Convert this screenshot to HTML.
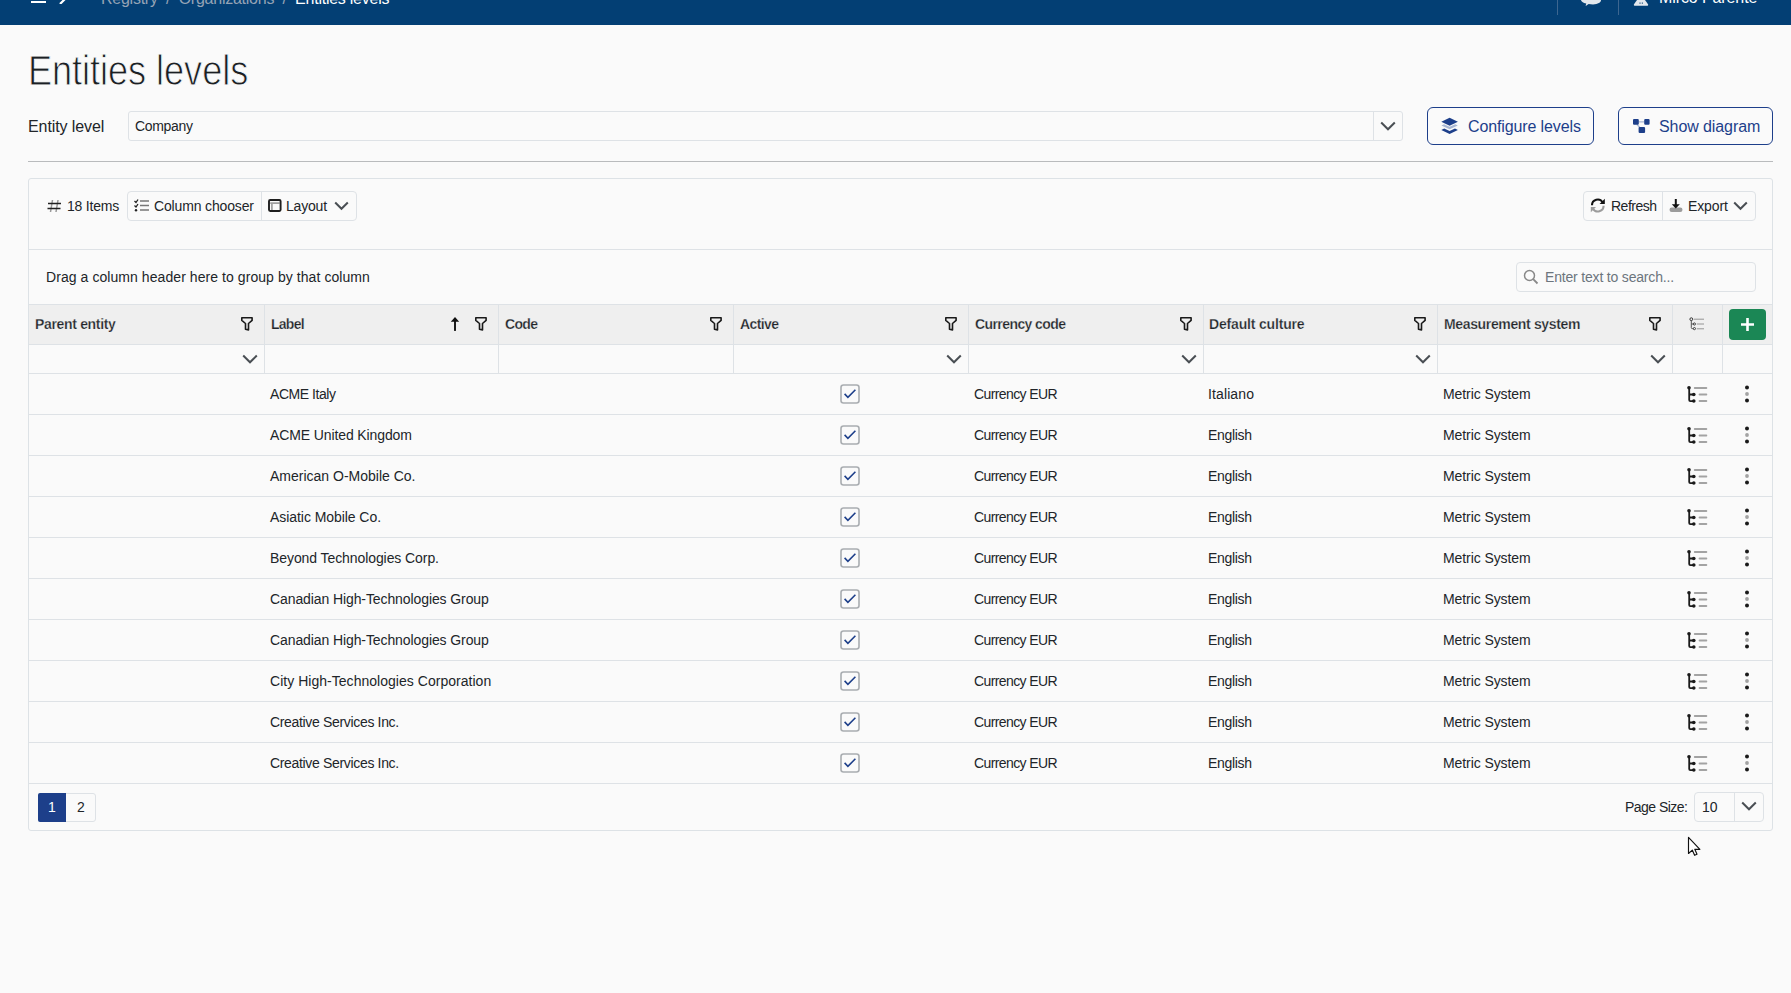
<!DOCTYPE html>
<html><head><meta charset="utf-8">
<style>
*{box-sizing:border-box;margin:0;padding:0}
html,body{width:1791px;height:993px;overflow:hidden;background:#fafafa;font-family:"Liberation Sans",sans-serif;color:#212529}
.a{position:absolute;white-space:nowrap}
svg{display:block}
.t14{font-size:14px;line-height:16px}
.t16{font-size:16px;line-height:18px}
.hl{position:absolute;height:1px;background:#dee2e6}
.vl{position:absolute;width:1px;background:#dee2e6}
.bx{position:absolute;border:1px solid #dee2e6;border-radius:4px}
.hb{font-weight:bold;letter-spacing:-0.4px;-webkit-text-stroke:0.25px #efefef}
</style></head><body>

<div class="a" style="left:0;top:0;width:1791px;height:25px;background:#033f74;overflow:hidden">
<div class="a" style="left:31px;top:1px;width:15px;height:2px;background:#fff"></div>
<svg class="a" style="left:57px;top:-10px" width="14" height="14" viewBox="0 0 14 14"><path d="M3 0l7 7-7 7" fill="none" stroke="#fff" stroke-width="2.2"/></svg>
<div class="a t16" style="left:101px;top:-10px;color:#95a3b5;letter-spacing:-0.25px">Registry &nbsp;/&nbsp; Organizations &nbsp;/&nbsp; <span style="color:#fff">Entities levels</span></div>
<div class="a" style="left:1557px;top:0;width:1px;height:15px;background:#3d6690"></div>
<div class="a" style="left:1618px;top:0;width:1px;height:15px;background:#3d6690"></div>
<svg class="a" style="left:1580px;top:0px" width="22" height="8" viewBox="0 0 22 8"><path d="M1 0h20c0 2.5-3 4.2-8 4.4-1.5 0-3 0-4.3-.3L5.5 6 6.3 3.6C3 2.8 1 1.5 1 0z" fill="#e3e7ec"/></svg>
<svg class="a" style="left:1633px;top:0px" width="16" height="7" viewBox="0 0 16 7"><path d="M4 0h8l3 4.2c.5.8 0 1.6-1 1.6H2c-1 0-1.5-.8-1-1.6z" fill="#e3e7ec"/><path d="M6.5 3.2h1M8.8 3.2h1" stroke="#033f74" stroke-width="1.2"/></svg>
<div class="a t16" style="left:1659px;top:-11px;color:#fff;letter-spacing:-0.1px">Mirco Parente</div>
</div>
<div class="a" style="left:28px;top:48px;font-size:42px;line-height:46px;letter-spacing:-0.05px;color:#1b1f23;-webkit-text-stroke:0.9px #fafafa;transform:scaleX(0.86);transform-origin:0 0">Entities levels</div>
<div class="a t16" style="left:28px;top:118px;letter-spacing:-0.091px">Entity level</div>
<div class="bx" style="left:128px;top:111px;width:1275px;height:30px;border-radius:3px"></div>
<div class="vl" style="left:1373px;top:112px;height:28px"></div>
<div class="a t14" style="left:135px;top:118px;letter-spacing:-0.333px">Company</div>
<div class="a" style="left:1380px;top:121px"><svg width="16" height="10" viewBox="0 0 16 10"><path d="M1.2 1.5l6.8 6.8 6.8-6.8" fill="none" stroke="#4a4f54" stroke-width="2"/></svg></div>
<div class="a" style="left:1427px;top:107px;width:167px;height:38px;border:1.5px solid #1d3f8a;border-radius:6px"></div>
<svg class="a" style="left:1441px;top:117px" width="18" height="18" viewBox="0 0 18 18"><path d="M0.4 8.4L3 7.2 8.6 9.8 14.2 7.2 16.8 8.4 8.6 12.3z" fill="#a9b7d3"/><path d="M0.3 12.9L3.2 11.5 8.6 14 14 11.5 16.9 12.9 8.6 16.9z" fill="#1d3f8a"/><path d="M8.6 0.8L16.9 4.8 8.6 8.8 0.3 4.8z" fill="#1d3f8a"/></svg>
<div class="a t16" style="left:1468px;top:118px;color:#1d3f8a;letter-spacing:-0.12px">Configure levels</div>
<div class="a" style="left:1618px;top:107px;width:155px;height:38px;border:1.5px solid #1d3f8a;border-radius:6px"></div>
<svg class="a" style="left:1632px;top:118px" width="19" height="16" viewBox="0 0 19 16"><path d="M6.5 3.9h6M5 6.6l2.6 2.6" stroke="#a9b7d3" stroke-width="1.4"/><rect x="1" y="1" width="5.8" height="5.8" rx="1.1" fill="#1d3f8a"/><rect x="12.2" y="1" width="5.4" height="5.8" rx="1.1" fill="#1d3f8a"/><rect x="6.6" y="9" width="6.5" height="6" rx="1.1" fill="#1d3f8a"/></svg>
<div class="a t16" style="left:1659px;top:118px;color:#1d3f8a;letter-spacing:-0.091px">Show diagram</div>
<div class="a" style="left:28px;top:161px;width:1745px;height:1px;background:#b9bbbd"></div>
<div class="bx" style="left:28px;top:178px;width:1745px;height:653px;border-radius:3px;border-color:#dde2e6"></div>
<svg class="a" style="left:47px;top:199px" width="15" height="14" viewBox="0 0 15 14"><path d="M5.5 1L3.5 13M11 1L9 13" fill="none" stroke="#9a9a9a" stroke-width="1.5"/><path d="M1 4.5h13M0.5 9.5h13" fill="none" stroke="#222" stroke-width="1.5"/></svg>
<div class="a t14" style="left:67px;top:198px;letter-spacing:-0.201px">18 Items</div>
<div class="bx" style="left:127px;top:191px;width:230px;height:30px"></div>
<div class="vl" style="left:261px;top:192px;height:28px"></div>
<svg class="a" style="left:134px;top:199px" width="15" height="13" viewBox="0 0 15 13"><path d="M0.5 2l1.5 1.5L4 0.5M0.5 6.5l1.5 1.5L4 5" fill="none" stroke="#222" stroke-width="1.3"/><circle cx="2" cy="11.3" r="1.2" fill="#222"/><path d="M6 2h9M6 6.5h9M6 11h9" stroke="#777" stroke-width="1.3"/></svg>
<div class="a t14" style="left:154px;top:198px;letter-spacing:-0.154px">Column chooser</div>
<svg class="a" style="left:268px;top:199px" width="14" height="13" viewBox="0 0 14 13"><path d="M2.2 4.2h9.4M3.9 4.2v6.8" stroke="#a0a0a0" stroke-width="1.7"/><rect x="1" y="1" width="11.6" height="11" rx="1.2" fill="none" stroke="#1e1e1e" stroke-width="1.9"/></svg>
<div class="a t14" style="left:286px;top:198px;letter-spacing:-0.2px">Layout</div>
<svg class="a" style="left:334px;top:201px" width="16" height="10" viewBox="0 0 16 10"><path d="M1.2 1.5l6.3 6.3 6.3-6.3" fill="none" stroke="#4a4f54" stroke-width="2"/></svg>
<div class="bx" style="left:1583px;top:191px;width:173px;height:30px"></div>
<div class="vl" style="left:1662px;top:192px;height:28px"></div>
<svg class="a" style="left:1590px;top:198px" width="16" height="15" viewBox="0 0 16 15"><path d="M2 7.2A5.7 5.7 0 0 1 12.6 4.3" fill="none" stroke="#111" stroke-width="2.1"/><path d="M14.8 0.8v5.2H9.6z" fill="#111"/><path d="M13.6 7.8A5.7 5.7 0 0 1 3 10.7" fill="none" stroke="#9c9c9c" stroke-width="2.1"/><path d="M0.8 14.2V9h5.2z" fill="#9c9c9c"/></svg>
<div class="a t14" style="left:1611px;top:198px;letter-spacing:-0.5px">Refresh</div>
<svg class="a" style="left:1669px;top:199px" width="14" height="13" viewBox="0 0 14 13"><path d="M0.5 10.8a2.2 2.2 0 0 1 2.2-2.2h8.6a2.2 2.2 0 0 1 2.2 2.2v0a2.2 2.2 0 0 1-2.2 2.2H2.7a2.2 2.2 0 0 1-2.2-2.2z" fill="#9c9c9c"/><path d="M6.8 0v8" stroke="#111" stroke-width="2"/><path d="M2.8 5.2l4 4.2 4-4.2z" fill="#111"/></svg>
<div class="a t14" style="left:1688px;top:198px;letter-spacing:-0.12px">Export</div>
<svg class="a" style="left:1733px;top:201px" width="16" height="10" viewBox="0 0 16 10"><path d="M1.2 1.5l6.3 6.3 6.3-6.3" fill="none" stroke="#4a4f54" stroke-width="2"/></svg>
<div class="hl" style="left:29px;top:249px;width:1743px"></div>
<div class="a t14" style="left:46px;top:269px;letter-spacing:0.067px">Drag a column header here to group by that column</div>
<div class="bx" style="left:1516px;top:262px;width:240px;height:30px"></div>
<svg class="a" style="left:1523px;top:269px" width="16" height="16" viewBox="0 0 16 16"><circle cx="6.5" cy="6.5" r="5" fill="none" stroke="#888" stroke-width="1.5"/><path d="M10.2 10.2L14.5 14.5" stroke="#888" stroke-width="1.8"/></svg>
<div class="a t14" style="left:1545px;top:269px;color:#6c757d;letter-spacing:-0.182px">Enter text to search...</div>
<div class="a" style="left:29px;top:304px;width:1743px;height:40px;background:#efefef"></div>
<div class="hl" style="left:29px;top:304px;width:1743px"></div>
<div class="hl" style="left:29px;top:344px;width:1743px"></div>
<div class="hl" style="left:29px;top:373px;width:1743px"></div>
<div class="vl" style="left:264px;top:304px;height:69px"></div>
<div class="vl" style="left:498px;top:304px;height:69px"></div>
<div class="vl" style="left:733px;top:304px;height:69px"></div>
<div class="vl" style="left:968px;top:304px;height:69px"></div>
<div class="vl" style="left:1203px;top:304px;height:69px"></div>
<div class="vl" style="left:1437px;top:304px;height:69px"></div>
<div class="vl" style="left:1672px;top:304px;height:69px"></div>
<div class="vl" style="left:1722px;top:304px;height:69px"></div>
<div class="a t14 hb" style="left:35px;top:316px;letter-spacing:-0.333px">Parent entity</div>
<div class="a" style="left:240px;top:316px"><svg width="14" height="16" viewBox="0 0 14 16"><path d="M1.8 1.7H12.1V4.4L8.5 7.5V13.9L5.5 13.2V7.5L1.8 4.4Z" fill="none" stroke="#1a1a1a" stroke-width="1.6" stroke-linejoin="round"/></svg></div>
<div class="a" style="left:242px;top:354px"><svg width="16" height="10" viewBox="0 0 16 10"><path d="M1.2 1.5l6.8 6.8 6.8-6.8" fill="none" stroke="#4a4f54" stroke-width="2"/></svg></div>
<div class="a t14 hb" style="left:271px;top:316px;letter-spacing:-0.75px">Label</div>
<div class="a" style="left:474px;top:316px"><svg width="14" height="16" viewBox="0 0 14 16"><path d="M1.8 1.7H12.1V4.4L8.5 7.5V13.9L5.5 13.2V7.5L1.8 4.4Z" fill="none" stroke="#1a1a1a" stroke-width="1.6" stroke-linejoin="round"/></svg></div>
<div class="a t14 hb" style="left:505px;top:316px;letter-spacing:-0.667px">Code</div>
<div class="a" style="left:709px;top:316px"><svg width="14" height="16" viewBox="0 0 14 16"><path d="M1.8 1.7H12.1V4.4L8.5 7.5V13.9L5.5 13.2V7.5L1.8 4.4Z" fill="none" stroke="#1a1a1a" stroke-width="1.6" stroke-linejoin="round"/></svg></div>
<div class="a t14 hb" style="left:740px;top:316px;letter-spacing:-0.6px">Active</div>
<div class="a" style="left:944px;top:316px"><svg width="14" height="16" viewBox="0 0 14 16"><path d="M1.8 1.7H12.1V4.4L8.5 7.5V13.9L5.5 13.2V7.5L1.8 4.4Z" fill="none" stroke="#1a1a1a" stroke-width="1.6" stroke-linejoin="round"/></svg></div>
<div class="a" style="left:946px;top:354px"><svg width="16" height="10" viewBox="0 0 16 10"><path d="M1.2 1.5l6.8 6.8 6.8-6.8" fill="none" stroke="#4a4f54" stroke-width="2"/></svg></div>
<div class="a t14 hb" style="left:975px;top:316px;letter-spacing:-0.583px">Currency code</div>
<div class="a" style="left:1179px;top:316px"><svg width="14" height="16" viewBox="0 0 14 16"><path d="M1.8 1.7H12.1V4.4L8.5 7.5V13.9L5.5 13.2V7.5L1.8 4.4Z" fill="none" stroke="#1a1a1a" stroke-width="1.6" stroke-linejoin="round"/></svg></div>
<div class="a" style="left:1181px;top:354px"><svg width="16" height="10" viewBox="0 0 16 10"><path d="M1.2 1.5l6.8 6.8 6.8-6.8" fill="none" stroke="#4a4f54" stroke-width="2"/></svg></div>
<div class="a t14 hb" style="left:1209px;top:316px;letter-spacing:-0.171px">Default culture</div>
<div class="a" style="left:1413px;top:316px"><svg width="14" height="16" viewBox="0 0 14 16"><path d="M1.8 1.7H12.1V4.4L8.5 7.5V13.9L5.5 13.2V7.5L1.8 4.4Z" fill="none" stroke="#1a1a1a" stroke-width="1.6" stroke-linejoin="round"/></svg></div>
<div class="a" style="left:1415px;top:354px"><svg width="16" height="10" viewBox="0 0 16 10"><path d="M1.2 1.5l6.8 6.8 6.8-6.8" fill="none" stroke="#4a4f54" stroke-width="2"/></svg></div>
<div class="a t14 hb" style="left:1444px;top:316px;letter-spacing:-0.353px">Measurement system</div>
<div class="a" style="left:1648px;top:316px"><svg width="14" height="16" viewBox="0 0 14 16"><path d="M1.8 1.7H12.1V4.4L8.5 7.5V13.9L5.5 13.2V7.5L1.8 4.4Z" fill="none" stroke="#1a1a1a" stroke-width="1.6" stroke-linejoin="round"/></svg></div>
<div class="a" style="left:1650px;top:354px"><svg width="16" height="10" viewBox="0 0 16 10"><path d="M1.2 1.5l6.8 6.8 6.8-6.8" fill="none" stroke="#4a4f54" stroke-width="2"/></svg></div>
<svg class="a" style="left:450px;top:316px" width="10" height="16" viewBox="0 0 10 16"><path d="M0.8 5.8L5 0.9 9.2 5.8z" fill="#111"/><rect x="4.05" y="5" width="1.9" height="9.9" fill="#111"/></svg>
<svg class="a" style="left:1689px;top:317px" width="17" height="14" viewBox="0 0 17 14"><circle cx="2.3" cy="2.2" r="1.4" fill="none" stroke="#333" stroke-width="1"/><path d="M2.3 3.6v7c0 .7.3 1 1 1h1.2M2.3 7h2.2" fill="none" stroke="#555" stroke-width="1"/><circle cx="5.4" cy="7" r="1.1" fill="none" stroke="#333" stroke-width="0.9"/><circle cx="5.4" cy="11.6" r="1.1" fill="none" stroke="#333" stroke-width="0.9"/><path d="M4.8 2.2h10.2M7.8 7h7.2M7.8 11.8h7.2" stroke="#8a8a8a" stroke-width="0.9"/></svg>
<div class="a" style="left:1729px;top:309px;width:37px;height:31px;background:#1b8755;border-radius:4px"></div>
<svg class="a" style="left:1739px;top:316px" width="17" height="17" viewBox="0 0 17 17"><path d="M8.5 2v13M2 8.5h13" stroke="#fff" stroke-width="2.6"/></svg>
<div class="hl" style="left:29px;top:414px;width:1743px"></div>
<div class="a t14" style="left:270px;top:386px;letter-spacing:-0.444px">ACME Italy</div>
<div class="a" style="left:840px;top:384px"><svg width="20" height="20" viewBox="0 0 20 20"><rect x="1" y="1" width="18" height="18" rx="2.5" fill="#fafafa" stroke="#a9adb1" stroke-width="1.6"/><path d="M4.6 9.9L7.9 13.3L15.4 5.8" fill="none" stroke="#1d3f8a" stroke-width="1.6"/></svg></div>
<div class="a t14" style="left:974px;top:386px;letter-spacing:-0.599px">Currency EUR</div>
<div class="a t14" style="left:1208px;top:386px;letter-spacing:0.114px">Italiano</div>
<div class="a t14" style="left:1443px;top:386px;letter-spacing:-0.083px">Metric System</div>
<div class="a" style="left:1687px;top:385px"><svg width="22" height="19" viewBox="0 0 22 19"><path d="M2.2 2.8v12.2c0 .8.4 1.2 1.2 1.2H6.8M2.2 9.5H6.8" fill="none" stroke="#1a1a1a" stroke-width="1.8"/><circle cx="2" cy="2.8" r="1.8" fill="#1a1a1a"/><circle cx="6.8" cy="9.5" r="1.8" fill="#1a1a1a"/><circle cx="6.8" cy="16" r="1.8" fill="#1a1a1a"/><path d="M7.8 3h11.5M12.6 9.5h6.7M12.6 16h6.7" fill="none" stroke="#a3a3a3" stroke-width="2" stroke-linecap="round"/></svg></div>
<div class="a" style="left:1744px;top:385px"><svg width="6" height="18" viewBox="0 0 6 18"><circle cx="3" cy="2.5" r="2" fill="#1a1a1a"/><circle cx="3" cy="9" r="1.9" fill="#a3a3a3"/><circle cx="3" cy="15.5" r="2" fill="#1a1a1a"/></svg></div>
<div class="hl" style="left:29px;top:455px;width:1743px"></div>
<div class="a t14" style="left:270px;top:427px;letter-spacing:-0.111px">ACME United Kingdom</div>
<div class="a" style="left:840px;top:425px"><svg width="20" height="20" viewBox="0 0 20 20"><rect x="1" y="1" width="18" height="18" rx="2.5" fill="#fafafa" stroke="#a9adb1" stroke-width="1.6"/><path d="M4.6 9.9L7.9 13.3L15.4 5.8" fill="none" stroke="#1d3f8a" stroke-width="1.6"/></svg></div>
<div class="a t14" style="left:974px;top:427px;letter-spacing:-0.599px">Currency EUR</div>
<div class="a t14" style="left:1208px;top:427px;letter-spacing:-0.333px">English</div>
<div class="a t14" style="left:1443px;top:427px;letter-spacing:-0.083px">Metric System</div>
<div class="a" style="left:1687px;top:426px"><svg width="22" height="19" viewBox="0 0 22 19"><path d="M2.2 2.8v12.2c0 .8.4 1.2 1.2 1.2H6.8M2.2 9.5H6.8" fill="none" stroke="#1a1a1a" stroke-width="1.8"/><circle cx="2" cy="2.8" r="1.8" fill="#1a1a1a"/><circle cx="6.8" cy="9.5" r="1.8" fill="#1a1a1a"/><circle cx="6.8" cy="16" r="1.8" fill="#1a1a1a"/><path d="M7.8 3h11.5M12.6 9.5h6.7M12.6 16h6.7" fill="none" stroke="#a3a3a3" stroke-width="2" stroke-linecap="round"/></svg></div>
<div class="a" style="left:1744px;top:426px"><svg width="6" height="18" viewBox="0 0 6 18"><circle cx="3" cy="2.5" r="2" fill="#1a1a1a"/><circle cx="3" cy="9" r="1.9" fill="#a3a3a3"/><circle cx="3" cy="15.5" r="2" fill="#1a1a1a"/></svg></div>
<div class="hl" style="left:29px;top:496px;width:1743px"></div>
<div class="a t14" style="left:270px;top:468px;letter-spacing:0.0px">American O-Mobile Co.</div>
<div class="a" style="left:840px;top:466px"><svg width="20" height="20" viewBox="0 0 20 20"><rect x="1" y="1" width="18" height="18" rx="2.5" fill="#fafafa" stroke="#a9adb1" stroke-width="1.6"/><path d="M4.6 9.9L7.9 13.3L15.4 5.8" fill="none" stroke="#1d3f8a" stroke-width="1.6"/></svg></div>
<div class="a t14" style="left:974px;top:468px;letter-spacing:-0.599px">Currency EUR</div>
<div class="a t14" style="left:1208px;top:468px;letter-spacing:-0.333px">English</div>
<div class="a t14" style="left:1443px;top:468px;letter-spacing:-0.083px">Metric System</div>
<div class="a" style="left:1687px;top:467px"><svg width="22" height="19" viewBox="0 0 22 19"><path d="M2.2 2.8v12.2c0 .8.4 1.2 1.2 1.2H6.8M2.2 9.5H6.8" fill="none" stroke="#1a1a1a" stroke-width="1.8"/><circle cx="2" cy="2.8" r="1.8" fill="#1a1a1a"/><circle cx="6.8" cy="9.5" r="1.8" fill="#1a1a1a"/><circle cx="6.8" cy="16" r="1.8" fill="#1a1a1a"/><path d="M7.8 3h11.5M12.6 9.5h6.7M12.6 16h6.7" fill="none" stroke="#a3a3a3" stroke-width="2" stroke-linecap="round"/></svg></div>
<div class="a" style="left:1744px;top:467px"><svg width="6" height="18" viewBox="0 0 6 18"><circle cx="3" cy="2.5" r="2" fill="#1a1a1a"/><circle cx="3" cy="9" r="1.9" fill="#a3a3a3"/><circle cx="3" cy="15.5" r="2" fill="#1a1a1a"/></svg></div>
<div class="hl" style="left:29px;top:537px;width:1743px"></div>
<div class="a t14" style="left:270px;top:509px;letter-spacing:-0.059px">Asiatic Mobile Co.</div>
<div class="a" style="left:840px;top:507px"><svg width="20" height="20" viewBox="0 0 20 20"><rect x="1" y="1" width="18" height="18" rx="2.5" fill="#fafafa" stroke="#a9adb1" stroke-width="1.6"/><path d="M4.6 9.9L7.9 13.3L15.4 5.8" fill="none" stroke="#1d3f8a" stroke-width="1.6"/></svg></div>
<div class="a t14" style="left:974px;top:509px;letter-spacing:-0.599px">Currency EUR</div>
<div class="a t14" style="left:1208px;top:509px;letter-spacing:-0.333px">English</div>
<div class="a t14" style="left:1443px;top:509px;letter-spacing:-0.083px">Metric System</div>
<div class="a" style="left:1687px;top:508px"><svg width="22" height="19" viewBox="0 0 22 19"><path d="M2.2 2.8v12.2c0 .8.4 1.2 1.2 1.2H6.8M2.2 9.5H6.8" fill="none" stroke="#1a1a1a" stroke-width="1.8"/><circle cx="2" cy="2.8" r="1.8" fill="#1a1a1a"/><circle cx="6.8" cy="9.5" r="1.8" fill="#1a1a1a"/><circle cx="6.8" cy="16" r="1.8" fill="#1a1a1a"/><path d="M7.8 3h11.5M12.6 9.5h6.7M12.6 16h6.7" fill="none" stroke="#a3a3a3" stroke-width="2" stroke-linecap="round"/></svg></div>
<div class="a" style="left:1744px;top:508px"><svg width="6" height="18" viewBox="0 0 6 18"><circle cx="3" cy="2.5" r="2" fill="#1a1a1a"/><circle cx="3" cy="9" r="1.9" fill="#a3a3a3"/><circle cx="3" cy="15.5" r="2" fill="#1a1a1a"/></svg></div>
<div class="hl" style="left:29px;top:578px;width:1743px"></div>
<div class="a t14" style="left:270px;top:550px;letter-spacing:-0.083px">Beyond Technologies Corp.</div>
<div class="a" style="left:840px;top:548px"><svg width="20" height="20" viewBox="0 0 20 20"><rect x="1" y="1" width="18" height="18" rx="2.5" fill="#fafafa" stroke="#a9adb1" stroke-width="1.6"/><path d="M4.6 9.9L7.9 13.3L15.4 5.8" fill="none" stroke="#1d3f8a" stroke-width="1.6"/></svg></div>
<div class="a t14" style="left:974px;top:550px;letter-spacing:-0.599px">Currency EUR</div>
<div class="a t14" style="left:1208px;top:550px;letter-spacing:-0.333px">English</div>
<div class="a t14" style="left:1443px;top:550px;letter-spacing:-0.083px">Metric System</div>
<div class="a" style="left:1687px;top:549px"><svg width="22" height="19" viewBox="0 0 22 19"><path d="M2.2 2.8v12.2c0 .8.4 1.2 1.2 1.2H6.8M2.2 9.5H6.8" fill="none" stroke="#1a1a1a" stroke-width="1.8"/><circle cx="2" cy="2.8" r="1.8" fill="#1a1a1a"/><circle cx="6.8" cy="9.5" r="1.8" fill="#1a1a1a"/><circle cx="6.8" cy="16" r="1.8" fill="#1a1a1a"/><path d="M7.8 3h11.5M12.6 9.5h6.7M12.6 16h6.7" fill="none" stroke="#a3a3a3" stroke-width="2" stroke-linecap="round"/></svg></div>
<div class="a" style="left:1744px;top:549px"><svg width="6" height="18" viewBox="0 0 6 18"><circle cx="3" cy="2.5" r="2" fill="#1a1a1a"/><circle cx="3" cy="9" r="1.9" fill="#a3a3a3"/><circle cx="3" cy="15.5" r="2" fill="#1a1a1a"/></svg></div>
<div class="hl" style="left:29px;top:619px;width:1743px"></div>
<div class="a t14" style="left:270px;top:591px;letter-spacing:-0.097px">Canadian High-Technologies Group</div>
<div class="a" style="left:840px;top:589px"><svg width="20" height="20" viewBox="0 0 20 20"><rect x="1" y="1" width="18" height="18" rx="2.5" fill="#fafafa" stroke="#a9adb1" stroke-width="1.6"/><path d="M4.6 9.9L7.9 13.3L15.4 5.8" fill="none" stroke="#1d3f8a" stroke-width="1.6"/></svg></div>
<div class="a t14" style="left:974px;top:591px;letter-spacing:-0.599px">Currency EUR</div>
<div class="a t14" style="left:1208px;top:591px;letter-spacing:-0.333px">English</div>
<div class="a t14" style="left:1443px;top:591px;letter-spacing:-0.083px">Metric System</div>
<div class="a" style="left:1687px;top:590px"><svg width="22" height="19" viewBox="0 0 22 19"><path d="M2.2 2.8v12.2c0 .8.4 1.2 1.2 1.2H6.8M2.2 9.5H6.8" fill="none" stroke="#1a1a1a" stroke-width="1.8"/><circle cx="2" cy="2.8" r="1.8" fill="#1a1a1a"/><circle cx="6.8" cy="9.5" r="1.8" fill="#1a1a1a"/><circle cx="6.8" cy="16" r="1.8" fill="#1a1a1a"/><path d="M7.8 3h11.5M12.6 9.5h6.7M12.6 16h6.7" fill="none" stroke="#a3a3a3" stroke-width="2" stroke-linecap="round"/></svg></div>
<div class="a" style="left:1744px;top:590px"><svg width="6" height="18" viewBox="0 0 6 18"><circle cx="3" cy="2.5" r="2" fill="#1a1a1a"/><circle cx="3" cy="9" r="1.9" fill="#a3a3a3"/><circle cx="3" cy="15.5" r="2" fill="#1a1a1a"/></svg></div>
<div class="hl" style="left:29px;top:660px;width:1743px"></div>
<div class="a t14" style="left:270px;top:632px;letter-spacing:-0.097px">Canadian High-Technologies Group</div>
<div class="a" style="left:840px;top:630px"><svg width="20" height="20" viewBox="0 0 20 20"><rect x="1" y="1" width="18" height="18" rx="2.5" fill="#fafafa" stroke="#a9adb1" stroke-width="1.6"/><path d="M4.6 9.9L7.9 13.3L15.4 5.8" fill="none" stroke="#1d3f8a" stroke-width="1.6"/></svg></div>
<div class="a t14" style="left:974px;top:632px;letter-spacing:-0.599px">Currency EUR</div>
<div class="a t14" style="left:1208px;top:632px;letter-spacing:-0.333px">English</div>
<div class="a t14" style="left:1443px;top:632px;letter-spacing:-0.083px">Metric System</div>
<div class="a" style="left:1687px;top:631px"><svg width="22" height="19" viewBox="0 0 22 19"><path d="M2.2 2.8v12.2c0 .8.4 1.2 1.2 1.2H6.8M2.2 9.5H6.8" fill="none" stroke="#1a1a1a" stroke-width="1.8"/><circle cx="2" cy="2.8" r="1.8" fill="#1a1a1a"/><circle cx="6.8" cy="9.5" r="1.8" fill="#1a1a1a"/><circle cx="6.8" cy="16" r="1.8" fill="#1a1a1a"/><path d="M7.8 3h11.5M12.6 9.5h6.7M12.6 16h6.7" fill="none" stroke="#a3a3a3" stroke-width="2" stroke-linecap="round"/></svg></div>
<div class="a" style="left:1744px;top:631px"><svg width="6" height="18" viewBox="0 0 6 18"><circle cx="3" cy="2.5" r="2" fill="#1a1a1a"/><circle cx="3" cy="9" r="1.9" fill="#a3a3a3"/><circle cx="3" cy="15.5" r="2" fill="#1a1a1a"/></svg></div>
<div class="hl" style="left:29px;top:701px;width:1743px"></div>
<div class="a t14" style="left:270px;top:673px;letter-spacing:0.03px">City High-Technologies Corporation</div>
<div class="a" style="left:840px;top:671px"><svg width="20" height="20" viewBox="0 0 20 20"><rect x="1" y="1" width="18" height="18" rx="2.5" fill="#fafafa" stroke="#a9adb1" stroke-width="1.6"/><path d="M4.6 9.9L7.9 13.3L15.4 5.8" fill="none" stroke="#1d3f8a" stroke-width="1.6"/></svg></div>
<div class="a t14" style="left:974px;top:673px;letter-spacing:-0.599px">Currency EUR</div>
<div class="a t14" style="left:1208px;top:673px;letter-spacing:-0.333px">English</div>
<div class="a t14" style="left:1443px;top:673px;letter-spacing:-0.083px">Metric System</div>
<div class="a" style="left:1687px;top:672px"><svg width="22" height="19" viewBox="0 0 22 19"><path d="M2.2 2.8v12.2c0 .8.4 1.2 1.2 1.2H6.8M2.2 9.5H6.8" fill="none" stroke="#1a1a1a" stroke-width="1.8"/><circle cx="2" cy="2.8" r="1.8" fill="#1a1a1a"/><circle cx="6.8" cy="9.5" r="1.8" fill="#1a1a1a"/><circle cx="6.8" cy="16" r="1.8" fill="#1a1a1a"/><path d="M7.8 3h11.5M12.6 9.5h6.7M12.6 16h6.7" fill="none" stroke="#a3a3a3" stroke-width="2" stroke-linecap="round"/></svg></div>
<div class="a" style="left:1744px;top:672px"><svg width="6" height="18" viewBox="0 0 6 18"><circle cx="3" cy="2.5" r="2" fill="#1a1a1a"/><circle cx="3" cy="9" r="1.9" fill="#a3a3a3"/><circle cx="3" cy="15.5" r="2" fill="#1a1a1a"/></svg></div>
<div class="hl" style="left:29px;top:742px;width:1743px"></div>
<div class="a t14" style="left:270px;top:714px;letter-spacing:-0.333px">Creative Services Inc.</div>
<div class="a" style="left:840px;top:712px"><svg width="20" height="20" viewBox="0 0 20 20"><rect x="1" y="1" width="18" height="18" rx="2.5" fill="#fafafa" stroke="#a9adb1" stroke-width="1.6"/><path d="M4.6 9.9L7.9 13.3L15.4 5.8" fill="none" stroke="#1d3f8a" stroke-width="1.6"/></svg></div>
<div class="a t14" style="left:974px;top:714px;letter-spacing:-0.599px">Currency EUR</div>
<div class="a t14" style="left:1208px;top:714px;letter-spacing:-0.333px">English</div>
<div class="a t14" style="left:1443px;top:714px;letter-spacing:-0.083px">Metric System</div>
<div class="a" style="left:1687px;top:713px"><svg width="22" height="19" viewBox="0 0 22 19"><path d="M2.2 2.8v12.2c0 .8.4 1.2 1.2 1.2H6.8M2.2 9.5H6.8" fill="none" stroke="#1a1a1a" stroke-width="1.8"/><circle cx="2" cy="2.8" r="1.8" fill="#1a1a1a"/><circle cx="6.8" cy="9.5" r="1.8" fill="#1a1a1a"/><circle cx="6.8" cy="16" r="1.8" fill="#1a1a1a"/><path d="M7.8 3h11.5M12.6 9.5h6.7M12.6 16h6.7" fill="none" stroke="#a3a3a3" stroke-width="2" stroke-linecap="round"/></svg></div>
<div class="a" style="left:1744px;top:713px"><svg width="6" height="18" viewBox="0 0 6 18"><circle cx="3" cy="2.5" r="2" fill="#1a1a1a"/><circle cx="3" cy="9" r="1.9" fill="#a3a3a3"/><circle cx="3" cy="15.5" r="2" fill="#1a1a1a"/></svg></div>
<div class="hl" style="left:29px;top:783px;width:1743px"></div>
<div class="a t14" style="left:270px;top:755px;letter-spacing:-0.333px">Creative Services Inc.</div>
<div class="a" style="left:840px;top:753px"><svg width="20" height="20" viewBox="0 0 20 20"><rect x="1" y="1" width="18" height="18" rx="2.5" fill="#fafafa" stroke="#a9adb1" stroke-width="1.6"/><path d="M4.6 9.9L7.9 13.3L15.4 5.8" fill="none" stroke="#1d3f8a" stroke-width="1.6"/></svg></div>
<div class="a t14" style="left:974px;top:755px;letter-spacing:-0.599px">Currency EUR</div>
<div class="a t14" style="left:1208px;top:755px;letter-spacing:-0.333px">English</div>
<div class="a t14" style="left:1443px;top:755px;letter-spacing:-0.083px">Metric System</div>
<div class="a" style="left:1687px;top:754px"><svg width="22" height="19" viewBox="0 0 22 19"><path d="M2.2 2.8v12.2c0 .8.4 1.2 1.2 1.2H6.8M2.2 9.5H6.8" fill="none" stroke="#1a1a1a" stroke-width="1.8"/><circle cx="2" cy="2.8" r="1.8" fill="#1a1a1a"/><circle cx="6.8" cy="9.5" r="1.8" fill="#1a1a1a"/><circle cx="6.8" cy="16" r="1.8" fill="#1a1a1a"/><path d="M7.8 3h11.5M12.6 9.5h6.7M12.6 16h6.7" fill="none" stroke="#a3a3a3" stroke-width="2" stroke-linecap="round"/></svg></div>
<div class="a" style="left:1744px;top:754px"><svg width="6" height="18" viewBox="0 0 6 18"><circle cx="3" cy="2.5" r="2" fill="#1a1a1a"/><circle cx="3" cy="9" r="1.9" fill="#a3a3a3"/><circle cx="3" cy="15.5" r="2" fill="#1a1a1a"/></svg></div>
<div class="bx" style="left:38px;top:793px;width:58px;height:29px;border-radius:3px"></div>
<div class="a" style="left:38px;top:793px;width:28px;height:29px;background:#1d3f8a;border-radius:2px 0 0 2px"></div>
<div class="a t14" style="left:48px;top:799px;color:#fff">1</div>
<div class="a t14" style="left:77px;top:799px">2</div>
<div class="a t14" style="left:1625px;top:799px;letter-spacing:-0.533px">Page Size:</div>
<div class="bx" style="left:1694px;top:792px;width:70px;height:30px"></div>
<div class="vl" style="left:1734px;top:793px;height:28px"></div>
<div class="a t14" style="left:1702px;top:799px;letter-spacing:0.0px">10</div>
<div class="a" style="left:1741px;top:801px"><svg width="16" height="10" viewBox="0 0 16 10"><path d="M1.2 1.5l6.8 6.8 6.8-6.8" fill="none" stroke="#4a4f54" stroke-width="2"/></svg></div>
<svg class="a" style="left:1687px;top:836px" width="16" height="22" viewBox="0 0 16 22"><path d="M1.5 1.3V17.5L5.3 14.1L7.6 19.3L10 18.3L7.8 13.3H12.9Z" fill="#fff" stroke="#111" stroke-width="1.15" stroke-linejoin="round"/></svg>
</body></html>
